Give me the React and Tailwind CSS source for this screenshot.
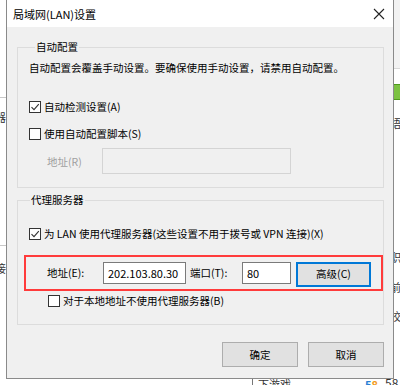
import React from "react";

const font = "font-['Noto_Sans_CJK_SC','Noto_Sans',sans-serif]";

function Check({ checked }) {
  return (
    <span className="w-[12px] h-[12px] border border-[#333333] bg-white flex items-center justify-center shrink-0">
      {checked && (
        <svg width="10" height="10" viewBox="0 0 10 10">
          <path d="M1.5 5.2 L4 7.7 L8.8 2.2" fill="none" stroke="#333" strokeWidth="1.1" />
        </svg>
      )}
    </span>
  );
}

function Btn({ children, className = "" }) {
  return (
    <div className={`flex items-center justify-center bg-[#e1e1e1] border border-[#adadad] text-[10.5px] leading-[14px] text-black ${className}`}>
      {children}
    </div>
  );
}

export default function App() {
  return (
    <div className={`relative w-[400px] h-[385px] overflow-hidden bg-white ${font}`}>
      {/* desktop background fragments */}
      <div className="absolute left-0 top-[97px] w-[8px] h-px bg-[#c8c8c8]" />
      <div className="absolute left-[-5px] top-[110px] text-[11px] leading-[14px] text-[#333]">器</div>
      <div className="absolute left-0 top-[245px] w-[8px] h-px bg-[#c8c8c8]" />
      <div className="absolute left-[-5px] top-[261px] text-[11px] leading-[14px] text-[#333]">接</div>
      <div className="absolute left-[393px] top-0 w-[7px] h-[68px] bg-[#f2f2f2]" />
      <div className="absolute left-[393px] top-[68px] w-[7px] h-px bg-[#d8d8d8]" />
      <div className="absolute left-[393px] top-[84px] w-[10px] h-[16px] bg-[#7cc242] border border-[#4e9a1c]" />
      <div className="absolute left-[390px] top-[116px] text-[11px] leading-[14px] text-[#333]">語</div>
      <div className="absolute left-[390px] top-[250px] text-[11px] leading-[14px] text-[#333]">职</div>
      <div className="absolute left-[390px] top-[280px] text-[11px] leading-[14px] text-[#333]">前</div>
      <div className="absolute left-[390px] top-[309px] text-[11px] leading-[14px] text-[#333]">校</div>
      <div className="absolute left-[252px] top-[378px] w-px h-[7px] bg-[#777]" />
      <div className="absolute left-[258px] top-[377px] text-[11px] leading-[14px] text-[#333]">下游戏</div>
      <div className="absolute left-[365px] top-[378px] text-[11px] leading-[12px] font-bold">
        <span className="text-[#2a7fd4]">5</span><span className="text-[#f29a1a]">8</span>
      </div>
      <div className="absolute left-[385px] top-[376px] text-[12px] leading-[14px] text-[#333]">58</div>

      {/* dialog window */}
      <div className="absolute left-[6px] top-0 w-[388px] h-[379px] flex flex-col bg-[#f0f0f0] border border-t-0 border-[#8a8a8a]">
        {/* title bar */}
        <div className="h-[27px] bg-white flex items-center justify-between pl-[6px] pr-[8px] shrink-0">
          <span className="text-[11px] leading-[14px] text-black">局域网(LAN)设置</span>
          <svg width="12" height="12" viewBox="0 0 12 12">
            <path d="M1 1 L11 11 M11 1 L1 11" stroke="#222" strokeWidth="1.1" />
          </svg>
        </div>

        <div className="flex flex-col pl-[10px] pr-[9px] pt-[13px] text-[10.5px] leading-[14px] text-black">
          {/* 自动配置 */}
          <fieldset className="border border-[#dcdcdc] pl-[11px] pr-0 pb-[13px] m-0">
            <legend className="ml-[6px] px-[1px] leading-[14px]">自动配置</legend>
            <div className="mt-[7px]">自动配置会覆盖手动设置。要确保使用手动设置，请禁用自动配置。</div>
            <div className="mt-[25px] flex items-center gap-[3px]">
              <Check checked />
              <span>自动检测设置(A)</span>
            </div>
            <div className="mt-[13px] flex items-center gap-[3px]">
              <Check />
              <span>使用自动配置脚本(S)</span>
            </div>
            <div className="mt-[7px] flex items-center">
              <span className="w-[73px] pl-[18px] text-[#a0a0a0] pt-[2px]">地址(R)</span>
              <div className="w-[189px] h-[26px] border border-[#d4d4d4] bg-[#f0f0f0]" />
            </div>
          </fieldset>

          {/* 代理服务器 */}
          <fieldset className="mt-[5px] border border-[#dcdcdc] pl-[6px] pr-0 pb-[16px] m-0">
            <legend className="ml-[6px] px-[1px] leading-[14px]">代理服务器</legend>
            <div className="mt-[20px] ml-[5px] flex items-center gap-[3px]">
              <Check checked />
              <span>为 LAN 使用代理服务器(这些设置不用于拨号或 VPN 连接)(X)</span>
            </div>
            <div className="mt-[14px] h-[36px] border-2 border-[#ff3b3b] flex items-center pl-[21px]">
              <span className="w-[56px]">地址(E):</span>
              <div className="w-[83px] h-[22px] border border-[#7a7a7a] bg-white flex items-center pl-[4px] text-[11px]">202.103.80.30</div>
              <span className="ml-[4px] w-[52px]">端口(T):</span>
              <div className="w-[49px] h-[22px] border border-[#7a7a7a] bg-white flex items-center pl-[4px] text-[11px]">80</div>
              <div className="ml-[5px] w-[75px] h-[25px] flex items-center justify-center bg-[#e1e1e1] border-2 border-[#0078d7] mt-[2px]">高级(C)</div>
            </div>
            <div className="mt-[3px] ml-[24px] flex items-center gap-[3px]">
              <Check />
              <span>对于本地地址不使用代理服务器(B)</span>
            </div>
          </fieldset>

          <div className="mt-[17px] flex justify-end gap-[10px]">
            <Btn className="w-[76px] h-[25px]">确定</Btn>
            <Btn className="w-[76px] h-[25px]">取消</Btn>
          </div>
        </div>
      </div>
    </div>
  );
}
